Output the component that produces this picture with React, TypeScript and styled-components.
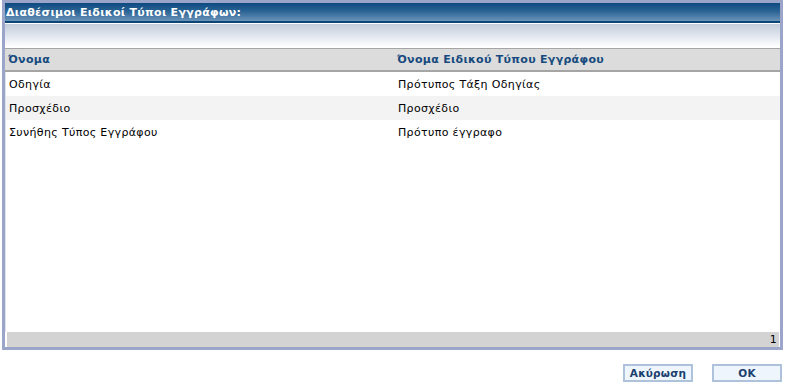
import styled, { createGlobalStyle } from "styled-components";

const GlobalStyle = createGlobalStyle`
  html, body {
    margin: 0;
    padding: 0;
    background: #ffffff;
  }
  body {
    font-family: "DejaVu Sans", Verdana, sans-serif;
    font-size: 11px;
    letter-spacing: 0.35px;
    color: #000000;
  }
`;

const Page = styled.div`
  width: 787px;
  height: 388px;
  box-sizing: border-box;
  padding: 0 4px 0 2px;
  display: flex;
  flex-direction: column;
`;

const Panel = styled.div`
  height: 350px;
  box-sizing: border-box;
  border: 3px solid #9aa5c9;
  display: flex;
  flex-direction: column;
  background: #ffffff;
`;

const TitleBar = styled.div`
  height: 18px;
  display: flex;
  align-items: center;
  padding-left: 1px;
  background: linear-gradient(to bottom, #0d4a80 0%, #2a6395 45%, #6a93b8 100%);
  color: #ffffff;
  font-weight: bold;
  letter-spacing: 0.3px;
  border-bottom: 2px solid #0b4577;
`;

const Band = styled.div`
  height: 23px;
  margin-top: 1px;
  margin-bottom: 1px;
  background: linear-gradient(to bottom, #c2ccdb 0%, #dde3ec 45%, #ffffff 100%);
`;

const TableArea = styled.div`
  flex: 1;
  display: flex;
  flex-direction: column;
`;

const Row = styled.div<{ $alt?: boolean }>`
  display: grid;
  grid-template-columns: 389px 1fr;
  height: 24px;
  align-items: center;
  background: ${(p) => (p.$alt ? "#f3f3f3" : "#ffffff")};
  border-left: 1px solid #dde2ee;
`;

const HeaderRow = styled(Row)`
  height: 21px;
  background: #dcdcdc;
  border-top: 1px solid #a5a5a5;
  border-bottom: 2px solid #a5a5a5;
  border-left: none;
  color: #164a7e;
  font-weight: bold;
  letter-spacing: 0.3px;
`;

const Cell = styled.div`
  padding-left: 3px;
  white-space: nowrap;
`;

const Filler = styled.div`
  flex: 1;
  border-left: 1px solid #dde2ee;
`;

const Footer = styled.div`
  height: 15px;
  margin: 0 1px 0 2px;
  background: #d3d3d3;
  display: flex;
  align-items: center;
  justify-content: flex-end;
  padding-right: 2px;
  font-size: 11px;
`;

const Buttons = styled.div`
  display: flex;
  justify-content: flex-end;
  gap: 19px;
  margin-top: 14px;
  padding-right: 1px;
`;

const Button = styled.button`
  width: 70px;
  height: 18px;
  box-sizing: border-box;
  border: 2px solid #aec2dc;
  background: #eef5fc;
  color: #1b3f6e;
  font-family: "DejaVu Sans", Verdana, sans-serif;
  font-weight: bold;
  font-size: 10.5px;
  letter-spacing: 0.2px;
  padding: 0;
  cursor: pointer;
`;

const rows = [
  ["Οδηγία", "Πρότυπος Τάξη Οδηγίας"],
  ["Προσχέδιο", "Προσχέδιο"],
  ["Συνήθης Τύπος Εγγράφου", "Πρότυπο έγγραφο"],
];

export default function App() {
  return (
    <>
      <GlobalStyle />
      <Page>
        <Panel>
          <TitleBar>Διαθέσιμοι Ειδικοί Τύποι Εγγράφων:</TitleBar>
          <Band />
          <TableArea>
            <HeaderRow>
              <Cell>Όνομα</Cell>
              <Cell>Όνομα Ειδικού Τύπου Εγγράφου</Cell>
            </HeaderRow>
            {rows.map(([name, type], i) => (
              <Row key={name} $alt={i % 2 === 1}>
                <Cell>{name}</Cell>
                <Cell>{type}</Cell>
              </Row>
            ))}
            <Filler />
            <Footer>1</Footer>
          </TableArea>
        </Panel>
        <Buttons>
          <Button type="button">Ακύρωση</Button>
          <Button type="button">OK</Button>
        </Buttons>
      </Page>
    </>
  );
}
